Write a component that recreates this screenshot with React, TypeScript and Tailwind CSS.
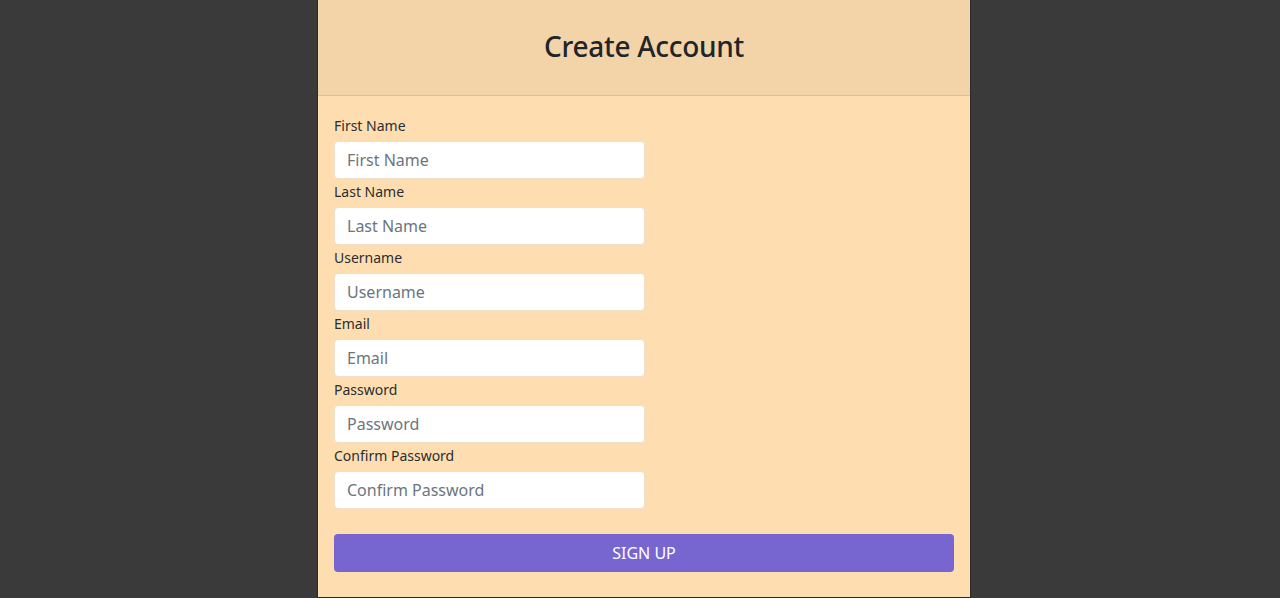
import React from "react";

const fields = [
  "First Name",
  "Last Name",
  "Username",
  "Email",
  "Password",
  "Confirm Password",
];

export default function App() {
  return (
    <div
      className="min-h-[598px] h-[598px] bg-[#3a3a3a] flex justify-center pl-[8px] overflow-hidden"
      style={{ fontFamily: '"Noto Sans", "Open Sans", sans-serif' }}
    >
      <div className="w-[654px] h-[598px] bg-[#fedeb0] border-x border-b border-[#2a2a2a] flex flex-col">
        <div className="h-[96px] bg-[#f3d4a9] border-b border-[#dcc09a] flex items-center justify-center pb-[4px]">
          <h1 className="text-[28px] font-medium text-[#212529] leading-none tracking-[-0.3px]">
            Create Account
          </h1>
        </div>
        <div className="px-[16px] pt-[17px] flex flex-col">
          {fields.map((f) => (
            <div key={f} className="flex flex-col">
              <label className="text-[14px] leading-[26px] mb-[2px] text-[#2a2d31]">
                {f}
              </label>
              <input
                type={f.includes("Password") ? "password" : "text"}
                placeholder={f}
                className="w-[311px] h-[38px] rounded-[4px] bg-white border border-[#eedfcb] px-[12px] text-[16px] text-[#212529] placeholder:text-[#6c757d] outline-none"
              />
            </div>
          ))}
          <button className="mt-[25px] h-[38px] w-full rounded-[4px] bg-[#7766d0] text-white text-[16px] uppercase">
            Sign Up
          </button>
        </div>
      </div>
    </div>
  );
}
